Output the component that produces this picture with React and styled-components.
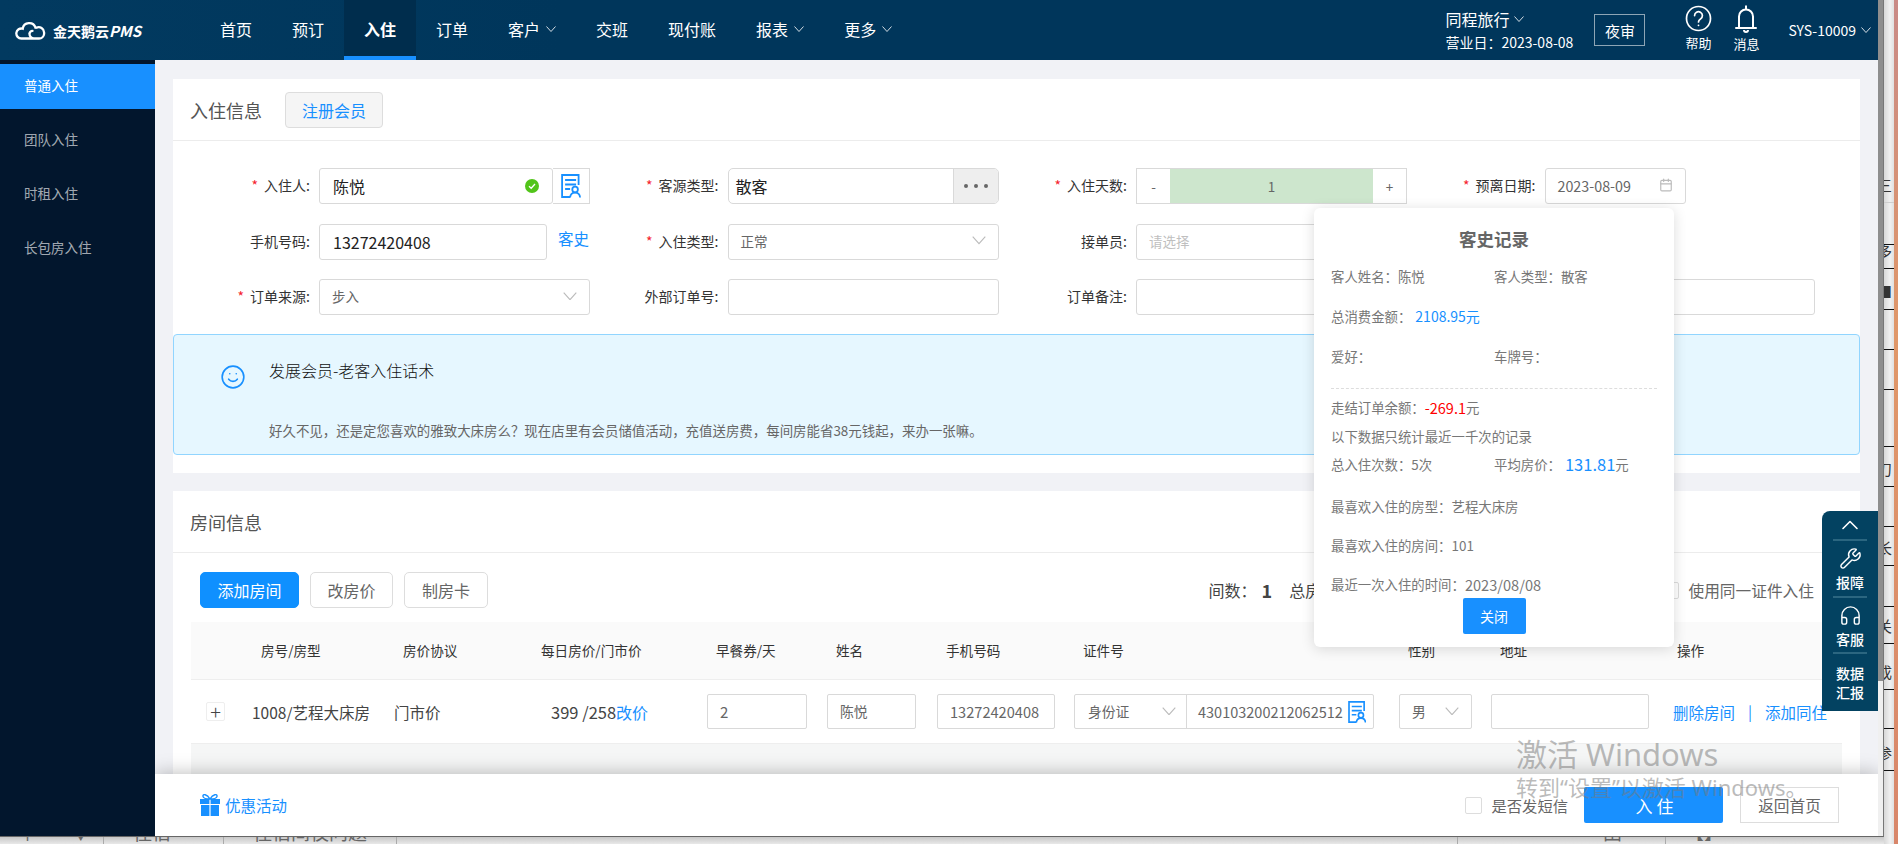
import React from 'react'
import styled, { createGlobalStyle } from 'styled-components'
import { Calendar, ChevronUp, Headphones, Smile, Wrench } from 'lucide-react'

const FONT = '"Noto Sans CJK SC", "Liberation Sans", sans-serif'
const BLUE = '#1890ff'

const GlobalStyle = createGlobalStyle`
    html, body {
        margin: 0;
        overflow: hidden;
        font-family: ${FONT};
        color: #333;
    }
    * {
        box-sizing: border-box;
    }
`

const Desktop = styled.div`
    width: 1898px;
    height: 844px;
    display: grid;
    grid-template-columns: 1884px 1fr;
    grid-template-rows: 837px 1fr;
    overflow: hidden;
    background: #e4e4e4;
`
const Browser = styled.div`
    position: relative;
    display: grid;
    grid-template-columns: 1fr 5px;
    border-right: 1px solid #777;
    border-bottom: 1px solid #666;
    overflow: hidden;
    background: #fff;
`
const Page = styled.div`
    display: grid;
    grid-template-columns: 155px 1fr;
    grid-template-rows: 60px 1fr;
    overflow: hidden;
`
const ScrollTrack = styled.div`
    background: #f0f0f0;
`
const ScrollThumb = styled.div`
    height: 681px;
    background: #8e8e8e;
`

/* header */
const Header = styled.header`
    grid-column: 1 / 3;
    display: flex;
    align-items: stretch;
    padding-right: 7px;
    color: #fff;
    background: linear-gradient(90deg, #023a60, #00365b 30%);
`
const Logo = styled.div`
    width: 200px;
    display: flex;
    align-items: center;
    gap: 7px;
    padding-left: 15px;
    font-size: 14px;
    font-weight: 700;
    white-space: nowrap;
    em {
        font-size: 15px;
        font-style: italic;
    }
`
const NavItem = styled.div`
    height: 60px;
    display: flex;
    align-items: center;
    gap: 6px;
    padding: 2px 20px 0;
    font-size: 16px;
    font-weight: ${(p) => (p.$active ? 700 : 400)};
    white-space: nowrap;
    background: ${(p) => (p.$active ? '#002d4d' : 'transparent')};
    border-bottom: 4px solid ${(p) => (p.$active ? BLUE : 'transparent')};
`
const HeaderRight = styled.div`
    margin-left: auto;
    display: flex;
    align-items: center;
`
const HotelBlock = styled.div`
    width: 129px;
    margin-right: 20px;
    white-space: nowrap;
`
const HotelName = styled.div`
    display: flex;
    align-items: center;
    gap: 5px;
    font-size: 16px;
    line-height: 22px;
`
const BizDate = styled.div`
    font-size: 14px;
    line-height: 20px;
    margin-top: 2px;
`
const AuditButton = styled.div`
    width: 51px;
    height: 32px;
    margin-right: 29px;
    display: flex;
    align-items: center;
    justify-content: center;
    font-size: 15px;
    border: 1px solid #8ea5b5;
`
const HeaderTool = styled.div`
    width: 48px;
    height: 60px;
    display: flex;
    flex-direction: column;
    align-items: center;
    padding-top: 5px;
    font-size: 13px;
    line-height: 18px;
    svg {
        margin-bottom: 2px;
    }
`
const UserName = styled.div`
    margin-left: 18px;
    display: flex;
    align-items: center;
    gap: 5px;
    font-size: 14px;
    white-space: nowrap;
`

/* sidebar */
const Sidebar = styled.aside`
    padding-top: 4px;
    background: #02162d;
`
const SideItem = styled.div`
    height: ${(p) => (p.$active ? 45 : 54)}px;
    margin-bottom: ${(p) => (p.$active ? 4 : 0)}px;
    display: flex;
    align-items: center;
    padding: 0 0 3px 24px;
    font-size: 13.5px;
    color: ${(p) => (p.$active ? '#fff' : 'rgba(255,255,255,.65)')};
    background: ${(p) => (p.$active ? BLUE : 'transparent')};
`

/* content */
const Content = styled.main`
    position: relative;
    padding: 19px 18px 0;
    overflow: hidden;
    background: #f1f2f6;
`
const Card = styled.section`
    background: #fff;
    margin-bottom: 18px;
`
const CardHead = styled.div`
    height: ${(p) => p.$height}px;
    display: flex;
    align-items: center;
    gap: 23px;
    padding-left: 17px;
    border-bottom: 1px solid #ececec;
`
const CardTitle = styled.h3`
    margin: 0;
    font-size: 18px;
    font-weight: 400;
    color: #555;
`
const RegisterButton = styled.div`
    width: 98px;
    height: 36px;
    display: flex;
    align-items: center;
    justify-content: center;
    font-size: 16px;
    color: ${BLUE};
    background: #f5f5f5;
    border: 1px solid #ddd;
    border-radius: 4px;
`

/* form */
const FormGrid = styled.div`
    display: grid;
    grid-template-columns: repeat(4, 408.5px);
    grid-auto-rows: 36px;
    row-gap: 19.5px;
    padding: 27px 0 19px 10px;
`
const Field = styled.div`
    display: flex;
    align-items: center;
    grid-column: ${(p) => (p.$span ? `span ${p.$span}` : 'auto')};
`
const Label = styled.label`
    width: 127px;
    margin-right: 9px;
    padding-bottom: 2px;
    flex-shrink: 0;
    text-align: right;
    font-size: 14px;
    color: #333;
    white-space: nowrap;
`
const Star = styled.span`
    margin-right: 6px;
    color: #f5222d;
`
const Box = styled.div`
    width: ${(p) => p.$width || 271}px;
    height: 36px;
    display: flex;
    align-items: center;
    justify-content: space-between;
    padding: 0 ${(p) => (p.$large ? 13 : 12)}px ${(p) => (p.$large ? 0 : 2)}px;
    font-size: ${(p) => (p.$large ? 16 : p.$size || 13.5)}px;
    color: ${(p) => (p.$large ? '#222' : p.$muted ? '#bfbfbf' : '#666')};
    background: #fff;
    border: 1px solid #d9d9d9;
    border-radius: 3px;
`
const IconAddon = styled.div`
    width: 37px;
    height: 36px;
    display: flex;
    align-items: center;
    justify-content: center;
    border: 1px solid #d9d9d9;
    border-left: 0;
`
const GhostLink = styled.a`
    margin-left: 11px;
    margin-bottom: 8px;
    font-size: 15.5px;
    color: ${BLUE};
`
const PickerBox = styled.div`
    width: 271px;
    height: 36px;
    display: flex;
    align-items: center;
    font-size: 16px;
    color: #222;
    border: 1px solid #d9d9d9;
    border-radius: 5px;
    overflow: hidden;
`
const PickerValue = styled.div`
    flex: 1;
    padding-left: 7px;
`
const PickerDots = styled.div`
    width: 45px;
    height: 100%;
    display: flex;
    align-items: center;
    justify-content: center;
    gap: 6px;
    background: #eee;
    border-left: 1px solid #d9d9d9;
    i {
        width: 4px;
        height: 4px;
        border-radius: 50%;
        background: #666;
    }
`
const Stepper = styled.div`
    width: 271px;
    height: 36px;
    display: grid;
    grid-template-columns: 33px 1fr 33px;
    font-size: 13.5px;
    color: #666;
    border: 1px solid #d9d9d9;
    > div {
        display: flex;
        align-items: center;
        justify-content: center;
    }
`
const StepperValue = styled.div`
    background: #cde6cd;
`

/* alert */
const Tip = styled.div`
    height: 121px;
    display: flex;
    padding: 29px 0 0 46px;
    background: #e6f7ff;
    border: 1px solid #91d5ff;
    border-radius: 4px;
    color: ${BLUE};
`
const TipBody = styled.div`
    margin: -4px 0 0 23px;
`
const TipTitle = styled.div`
    font-size: 16px;
    font-weight: 300;
    line-height: 20px;
    color: #111;
`
const TipText = styled.div`
    margin-top: 40px;
    font-size: 13.45px;
    line-height: 20px;
    color: #666;
`
const CardBottom = styled.div`
    height: 18px;
`

/* rooms */
const Toolbar = styled.div`
    height: 36px;
    margin: 19px 46px 14px 27px;
    display: flex;
    align-items: center;
    gap: 11px;
`
const ToolButton = styled.div`
    width: ${(p) => p.$width}px;
    height: 36px;
    display: flex;
    align-items: center;
    justify-content: center;
    font-size: 16px;
    color: ${(p) => (p.$primary ? '#fff' : '#666')};
    background: ${(p) => (p.$primary ? '#0f90ff' : '#fff')};
    border: 1px solid ${(p) => (p.$primary ? '#0f90ff' : '#ddd')};
    border-radius: 5px;
`
const Stats = styled.div`
    width: 453px;
    margin-left: auto;
    display: flex;
    align-items: center;
    gap: 5px;
    font-size: 16px;
    color: #444;
    white-space: nowrap;
    overflow: hidden;
    b {
        font-size: 18px;
        margin-right: 12px;
    }
`
const SameIdOption = styled.div`
    display: flex;
    align-items: center;
    gap: 10px;
    margin-left: -11px;
    font-size: 15.7px;
    color: #666;
    white-space: nowrap;
`
const CheckBox = styled.span`
    width: 17px;
    height: 17px;
    background: #fff;
    border: 1px solid #ddd;
    border-radius: 2px;
`
const COLUMNS = '54px 142px 143px 170px 120px 110px 137px 325px 92px 182px 176px'
const Table = styled.div`
    margin: 0 18px;
`
const TableHead = styled.div`
    height: 58px;
    display: grid;
    grid-template-columns: ${COLUMNS};
    align-items: center;
    font-size: 13.6px;
    color: #333;
    background: #fafafa;
    border-bottom: 1px solid #eee;
`
const Th = styled.div`
    padding-left: ${(p) => (p.$pad === undefined ? 16 : p.$pad)}px;
    padding-bottom: 2px;
    white-space: nowrap;
`
const TableRow = styled.div`
    height: 64px;
    display: grid;
    grid-template-columns: ${COLUMNS};
    align-items: center;
    font-size: 15.5px;
    color: #444;
    border-bottom: 1px solid #eee;
`
const Td = styled.div`
    padding-left: ${(p) => (p.$pad === undefined ? 7 : p.$pad)}px;
    display: flex;
    align-items: center;
    font-size: ${(p) => p.$size || 15.5}px;
    white-space: nowrap;
`
const ExpandButton = styled.span`
    width: 19px;
    height: 19px;
    margin-left: 8px;
    display: flex;
    align-items: center;
    justify-content: center;
    font-size: 20px;
    font-weight: 300;
    line-height: 1;
    border: 1px solid #eee;
    border-radius: 2px;
`
const CellBox = styled.div`
    width: ${(p) => p.$width}px;
    height: 35px;
    display: flex;
    align-items: center;
    justify-content: space-between;
    padding: 0 12px 1px;
    font-size: ${(p) => p.$size || 13.8}px;
    color: #666;
    border: 1px solid #d9d9d9;
    border-radius: 2px;
`
const IdGroup = styled.div`
    width: 300px;
    height: 35px;
    display: grid;
    grid-template-columns: 112px 1fr;
    align-items: center;
    font-size: 13.8px;
    color: #666;
    border: 1px solid #d9d9d9;
    border-radius: 2px;
`
const IdType = styled.div`
    height: 100%;
    display: flex;
    align-items: center;
    justify-content: space-between;
    padding: 0 10px 1px 13px;
    border-right: 1px solid #d9d9d9;
`
const IdNumber = styled.div`
    display: flex;
    align-items: center;
    justify-content: space-between;
    padding: 0 7px 0 11px;
    font-size: 14.5px;
`
const BlueLink = styled.a`
    color: ${BLUE};
    font-size: ${(p) => p.$size || 15.5}px;
`
const Separator = styled.span`
    margin: 0 13px;
    color: ${BLUE};
    font-size: 15px;
`
const ExpandArea = styled.div`
    height: 60px;
    background: #f5f6f6;
`

/* footer */
const Footer = styled.footer`
    position: absolute;
    left: 0;
    right: 0;
    bottom: 0;
    height: 62px;
    display: flex;
    align-items: center;
    padding: 0 39px 0 45px;
    background: #fff;
    box-shadow: 0 0 18px rgba(0, 0, 0, 0.28);
`
const PromoLink = styled.a`
    display: flex;
    align-items: center;
    gap: 5px;
    font-size: 15.5px;
    color: ${BLUE};
`
const FooterRight = styled.div`
    margin-left: auto;
    display: flex;
    align-items: center;
`
const SmsOption = styled.div`
    display: flex;
    align-items: center;
    gap: 10px;
    margin-right: 16px;
    font-size: 15.3px;
    color: #666;
`
const EnterButton = styled.div`
    width: 139px;
    height: 36px;
    padding-left: 6px;
    display: flex;
    align-items: center;
    justify-content: center;
    font-size: 17px;
    letter-spacing: 4px;
    color: #fff;
    background: ${BLUE};
    border-radius: 2px;
`
const BackButton = styled.div`
    width: 99px;
    height: 36px;
    margin-left: 17px;
    display: flex;
    align-items: center;
    justify-content: center;
    font-size: 15.7px;
    color: #666;
    background: #fff;
    border: 1px solid #ddd;
`

/* history popup */
const Popup = styled.div`
    position: absolute;
    left: 1159px;
    top: 148px;
    width: 360px;
    height: 439px;
    padding: 20px 17px 0;
    font-size: 13.4px;
    color: #777;
    background: #fff;
    border-radius: 6px;
    box-shadow: 0 2px 14px rgba(0, 0, 0, 0.14);
`
const PopupTitle = styled.div`
    margin-bottom: 17px;
    text-align: center;
    font-size: 17.5px;
    font-weight: 700;
    line-height: 22px;
    color: #666;
`
const PopupRow = styled.div`
    height: 20px;
    margin-bottom: ${(p) => p.$gap}px;
    padding-bottom: 2px;
    display: flex;
    align-items: center;
    white-space: nowrap;
`
const PopupCell = styled.div`
    width: 163px;
    display: flex;
    align-items: center;
`
const PopupDash = styled.div`
    margin: 1px 0 9px;
    border-top: 1px dashed #ddd;
`
const PopupValue = styled.span`
    margin-left: ${(p) => p.$left || 0}px;
    font-size: ${(p) => p.$size || 14}px;
    color: ${(p) => p.$color || 'inherit'};
`
const CloseButton = styled.div`
    width: 63px;
    height: 36px;
    margin: 3px auto 0;
    display: flex;
    align-items: center;
    justify-content: center;
    font-size: 14px;
    color: #fff;
    background: ${BLUE};
    border-radius: 2px;
`

/* floating tools */
const FloatPanel = styled.div`
    position: absolute;
    top: 451px;
    right: 0;
    width: 56px;
    height: 200px;
    display: flex;
    flex-direction: column;
    padding: 0 11px;
    color: #fff;
    background: #034261;
    border-top-left-radius: 8px;
`
const FloatItem = styled.div`
    height: ${(p) => p.$height}px;
    display: flex;
    flex-direction: column;
    align-items: center;
    justify-content: center;
    padding-top: ${(p) => (p.$icon ? 2 : 0)}px;
    font-size: 14px;
    font-weight: 500;
    line-height: 19px;
    text-align: center;
    border-bottom: ${(p) => (p.$last ? 0 : '2px solid #2b6680')};
    svg {
        margin-bottom: ${(p) => (p.$icon ? 3 : 0)}px;
    }
`

/* windows watermark */
const Watermark = styled.div`
    position: absolute;
    left: 1516px;
    top: 732px;
    font-family: "Noto Sans", ${FONT};
    color: rgba(120, 120, 120, 0.5);
    pointer-events: none;
    white-space: nowrap;
`
const WatermarkTitle = styled.div`
    font-size: 31px;
    line-height: 44px;
`
const WatermarkText = styled.div`
    font-size: 22px;
    line-height: 28px;
    margin-top: -3px;
`

/* bits of the window behind */
const RightEdge = styled.div`
    grid-column: 2;
    grid-row: 1 / 3;
    display: grid;
    grid-template-columns: 1fr 4px;
    overflow: hidden;
`
const RightColumn = styled.div`
    background: linear-gradient(90deg, #d8d8d8, #f0f0f0 60%, #e0e0e0);
`
const Sliver = styled.div`
    height: ${(p) => p.$height}px;
    display: flex;
    align-items: flex-end;
    border-bottom: 1px solid ${(p) => (p.$faint ? '#cfcfcf' : '#111')};
    font-size: 15px;
    line-height: 26px;
    color: #333;
    overflow: hidden;
    span {
        margin-left: -7px;
        margin-bottom: 4px;
    }
`
const OrangeEdge = styled.div`
    background: linear-gradient(#c98a86, #e09768 40%, #d8866a);
`
const BottomEdge = styled.div`
    grid-column: 1;
    grid-row: 2;
    display: flex;
    font-size: 19px;
    color: #666;
    overflow: hidden;
    background: linear-gradient(#c8c8c8, #e8e8e8);
`
const EdgeCell = styled.div`
    width: ${(p) => p.$width}px;
    padding-left: ${(p) => p.$pad || 0}px;
    border-right: 1px solid ${(p) => (p.$line ? '#aaa' : 'transparent')};
    word-spacing: 30px;
    white-space: nowrap;
    line-height: 19px;
    span {
        display: block;
        margin-top: -15px;
    }
`

const Chevron = ({ size = 10, color = '#d3dde4' }) => (
    <svg width={size} height={size * 0.6} viewBox="0 0 10 6" fill="none" stroke={color} strokeWidth={size > 10 ? 0.8 : 1}>
        <path d="M0.5 0.5 L5 5.5 L9.5 0.5" />
    </svg>
)

const CloudLogo = () => (
    <svg width="31" height="19" viewBox="0 0 31 19" fill="none" stroke="#fff" strokeWidth="2.3">
        <path d="M18 17.5 H6.5 a5 5 0 1 1 1.2 -9.8 a6.6 6.6 0 0 1 12.8 -1 a4.2 4.2 0 0 1 1 0 a5.4 5.4 0 0 1 7.6 4.8 v1.5 a5 5 0 0 1 -5 4.5 h-5 a4.5 4.5 0 0 1 -4.6 -4.6 a3 3 0 0 1 3 -3" strokeLinecap="round" />
    </svg>
)

const HelpIcon = () => (
    <svg width="27" height="27" viewBox="0 0 27 27" fill="none" stroke="#fff" strokeWidth="1.7">
        <circle cx="13.5" cy="13.5" r="12" />
        <path d="M9.6 10.6 a3.9 3.9 0 1 1 5.9 3.3 c-1.3 .8 -2 1.5 -2 3" strokeLinecap="round" />
        <circle cx="13.5" cy="20.3" r="0.9" fill="#fff" stroke="none" />
    </svg>
)

const BellIcon = () => (
    <svg width="22" height="28" viewBox="0 0 22 28" fill="none" stroke="#fff" strokeWidth="2">
        <path d="M4 22 V11.5 a7 7 0 0 1 14 0 V22" />
        <path d="M1 23 H21" strokeLinecap="round" />
        <path d="M11 0.5 V4" />
        <path d="M9 25 a2 2 0 0 0 4 0" />
    </svg>
)

const IdCardIcon = ({ height = 24 }) => (
    <svg width={height * 0.8} height={height} viewBox="0 0 19 24" fill="none" stroke={BLUE} strokeWidth="1.8">
        <path d="M9 23 H1 V1 H17.5 V11" />
        <path d="M4 6 H15 M4 10.5 H15 M4 15 H9" />
        <circle cx="14" cy="15.5" r="2.8" />
        <path d="M9 23.5 c0.3 -3.5 2 -4.8 5 -4.8 s4.7 1.3 5 4.8" />
    </svg>
)

const OkIcon = () => (
    <svg width="14" height="14" viewBox="0 0 14 14">
        <circle cx="7" cy="7" r="7" fill="#52c41a" />
        <path d="M4 7.2 L6.2 9.3 L10 5" fill="none" stroke="#fff" strokeWidth="1.3" />
    </svg>
)

const GiftIcon = () => (
    <svg width="20" height="22" viewBox="0 0 20 22" fill={BLUE}>
        <rect x="0" y="5" width="9.4" height="5" />
        <rect x="10.6" y="5" width="9.4" height="5" />
        <rect x="1" y="11" width="8.4" height="11" />
        <rect x="10.6" y="11" width="8.4" height="11" />
        <path d="M10 5 C7 0 2.5 -0.5 3 2.5 C3.3 4.5 7 5 10 5 C13 5 16.7 4.5 17 2.5 C17.5 -0.5 13 0 10 5 Z" fill="none" stroke={BLUE} strokeWidth="1.4" />
    </svg>
)

const NAV = [
    { name: '首页' },
    { name: '预订' },
    { name: '入住', active: true },
    { name: '订单' },
    { name: '客户', arrow: true },
    { name: '交班' },
    { name: '现付账' },
    { name: '报表', arrow: true },
    { name: '更多', arrow: true },
]

const SIDE = ['团队入住', '时租入住', '长包房入住']

const SLIVERS = [
    { h: 203, text: '三', faint: true },
    { h: 42 },
    { h: 24, text: '多' },
    { h: 41, text: '■' },
    { h: 40 },
    { h: 40 },
    { h: 57 },
    { h: 40, text: '刀' },
    { h: 40 },
    { h: 39, text: '长' },
    { h: 41 },
    { h: 37, text: '关' },
    { h: 46, text: '成' },
    { h: 39 },
    { h: 42, text: '参' },
]

const App = () => {
    return (
        <Desktop>
            <GlobalStyle />
            <Browser>
                <Page>
                    <Header>
                        <Logo>
                            <CloudLogo />
                            <span>金天鹅云<em>PMS</em></span>
                        </Logo>
                        {NAV.map((item) => (
                            <NavItem key={item.name} $active={item.active}>
                                {item.name}
                                {item.arrow && <Chevron />}
                            </NavItem>
                        ))}
                        <HeaderRight>
                            <HotelBlock>
                                <HotelName>同程旅行 <Chevron /></HotelName>
                                <BizDate>营业日：2023-08-08</BizDate>
                            </HotelBlock>
                            <AuditButton>夜审</AuditButton>
                            <HeaderTool><HelpIcon />帮助</HeaderTool>
                            <HeaderTool><BellIcon />消息</HeaderTool>
                            <UserName>SYS-10009 <Chevron /></UserName>
                        </HeaderRight>
                    </Header>

                    <Sidebar>
                        <SideItem $active>普通入住</SideItem>
                        {SIDE.map((name) => (
                            <SideItem key={name}>{name}</SideItem>
                        ))}
                    </Sidebar>

                    <Content>
                        <Card>
                            <CardHead $height={62}>
                                <CardTitle>入住信息</CardTitle>
                                <RegisterButton>注册会员</RegisterButton>
                            </CardHead>
                            <FormGrid>
                                <Field>
                                    <Label><Star>*</Star>入住人:</Label>
                                    <Box $width={234} $large>陈悦<OkIcon /></Box>
                                    <IconAddon><IdCardIcon /></IconAddon>
                                </Field>
                                <Field>
                                    <Label><Star>*</Star>客源类型:</Label>
                                    <PickerBox>
                                        <PickerValue>散客</PickerValue>
                                        <PickerDots><i /><i /><i /></PickerDots>
                                    </PickerBox>
                                </Field>
                                <Field>
                                    <Label><Star>*</Star>入住天数:</Label>
                                    <Stepper>
                                        <div>-</div>
                                        <StepperValue>1</StepperValue>
                                        <div>+</div>
                                    </Stepper>
                                </Field>
                                <Field>
                                    <Label><Star>*</Star>预离日期:</Label>
                                    <Box $width={141} $size={14.3}>2023-08-09<Calendar size={14} color="#bbb" /></Box>
                                </Field>

                                <Field>
                                    <Label>手机号码:</Label>
                                    <Box $width={228} $large>13272420408</Box>
                                    <GhostLink>客史</GhostLink>
                                </Field>
                                <Field>
                                    <Label><Star>*</Star>入住类型:</Label>
                                    <Box>正常<Chevron size={14} color="#bbb" /></Box>
                                </Field>
                                <Field>
                                    <Label>接单员:</Label>
                                    <Box $muted>请选择<Chevron size={14} color="#bbb" /></Box>
                                </Field>
                                <Field />

                                <Field>
                                    <Label><Star>*</Star>订单来源:</Label>
                                    <Box>步入<Chevron size={14} color="#bbb" /></Box>
                                </Field>
                                <Field>
                                    <Label>外部订单号:</Label>
                                    <Box />
                                </Field>
                                <Field $span={2}>
                                    <Label>订单备注:</Label>
                                    <Box $width={679} />
                                </Field>
                            </FormGrid>
                            <Tip>
                                <Smile size={26} strokeWidth={1.5} />
                                <TipBody>
                                    <TipTitle>发展会员-老客入住话术</TipTitle>
                                    <TipText>好久不见，还是定您喜欢的雅致大床房么？现在店里有会员储值活动，充值送房费，每间房能省38元钱起，来办一张嘛。</TipText>
                                </TipBody>
                            </Tip>
                            <CardBottom />
                        </Card>

                        <Card>
                            <CardHead $height={62}>
                                <CardTitle>房间信息</CardTitle>
                            </CardHead>
                            <Toolbar>
                                <ToolButton $primary $width={99}>添加房间</ToolButton>
                                <ToolButton $width={83}>改房价</ToolButton>
                                <ToolButton $width={84}>制房卡</ToolButton>
                                <Stats>
                                    间数：<b>1</b>总房价：399
                                </Stats>
                                <SameIdOption><CheckBox />使用同一证件入住</SameIdOption>
                            </Toolbar>
                            <Table>
                                <TableHead>
                                    <Th />
                                    <Th>房号/房型</Th>
                                    <Th>房价协议</Th>
                                    <Th $pad={11}>每日房价/门市价</Th>
                                    <Th>早餐券/天</Th>
                                    <Th>姓名</Th>
                                    <Th>手机号码</Th>
                                    <Th>证件号</Th>
                                    <Th>性别</Th>
                                    <Th>地址</Th>
                                    <Th $pad={11}>操作</Th>
                                </TableHead>
                                <TableRow>
                                    <Td><ExpandButton>+</ExpandButton></Td>
                                    <Td>1008/艺程大床房</Td>
                                    <Td>门市价</Td>
                                    <Td $pad={21} $size={16.5}>399 /258<BlueLink $size={16}>改价</BlueLink></Td>
                                    <Td><CellBox $width={100} $size={15}>2</CellBox></Td>
                                    <Td><CellBox $width={89}>陈悦</CellBox></Td>
                                    <Td><CellBox $width={118} $size={14.6}>13272420408</CellBox></Td>
                                    <Td>
                                        <IdGroup>
                                            <IdType>身份证<Chevron size={14} color="#bbb" /></IdType>
                                            <IdNumber>430103200212062512<IdCardIcon height={22} /></IdNumber>
                                        </IdGroup>
                                    </Td>
                                    <Td><CellBox $width={73}>男<Chevron size={14} color="#bbb" /></CellBox></Td>
                                    <Td><CellBox $width={158} /></Td>
                                    <Td>
                                        <BlueLink>删除房间</BlueLink>
                                        <Separator>|</Separator>
                                        <BlueLink>添加同住</BlueLink>
                                    </Td>
                                </TableRow>
                                <ExpandArea />
                            </Table>
                        </Card>

                        <Footer>
                            <PromoLink><GiftIcon />优惠活动</PromoLink>
                            <FooterRight>
                                <SmsOption><CheckBox />是否发短信</SmsOption>
                                <EnterButton>入住</EnterButton>
                                <BackButton>返回首页</BackButton>
                            </FooterRight>
                        </Footer>

                        <Popup>
                            <PopupTitle>客史记录</PopupTitle>
                            <PopupRow $gap={20}>
                                <PopupCell>客人姓名：陈悦</PopupCell>
                                <PopupCell>客人类型：散客</PopupCell>
                            </PopupRow>
                            <PopupRow $gap={20}>
                                总消费金额：<PopupValue $left={4} $color={BLUE}>2108.95元</PopupValue>
                            </PopupRow>
                            <PopupRow $gap={21}>
                                <PopupCell>爱好：</PopupCell>
                                <PopupCell>车牌号：</PopupCell>
                            </PopupRow>
                            <PopupDash />
                            <PopupRow $gap={9}>
                                走结订单余额：<PopupValue $size={14.5} $color="#ff0000">-269.1</PopupValue>元
                            </PopupRow>
                            <PopupRow $gap={8}>以下数据只统计最近一千次的记录</PopupRow>
                            <PopupRow $gap={22}>
                                <PopupCell>总入住次数：5次</PopupCell>
                                <PopupCell>
                                    平均房价：<PopupValue $left={4} $size={16.5} $color={BLUE}>131.81</PopupValue>元
                                </PopupCell>
                            </PopupRow>
                            <PopupRow $gap={19}>最喜欢入住的房型：艺程大床房</PopupRow>
                            <PopupRow $gap={19}>最喜欢入住的房间：101</PopupRow>
                            <PopupRow $gap={0}>最近一次入住的时间：<PopupValue $size={14.6}>2023/08/08</PopupValue></PopupRow>
                            <CloseButton>关闭</CloseButton>
                        </Popup>

                        <FloatPanel>
                            <FloatItem $height={30}><ChevronUp size={28} strokeWidth={1.4} /></FloatItem>
                            <FloatItem $height={57} $icon><Wrench size={23} strokeWidth={1.5} />报障</FloatItem>
                            <FloatItem $height={56} $icon><Headphones size={23} strokeWidth={1.5} />客服</FloatItem>
                            <FloatItem $height={57} $last>数据<br />汇报</FloatItem>
                        </FloatPanel>
                    </Content>
                </Page>
                <ScrollTrack><ScrollThumb /></ScrollTrack>
                <Watermark>
                    <WatermarkTitle>激活 Windows</WatermarkTitle>
                    <WatermarkText>转到“设置”以激活 Windows。</WatermarkText>
                </Watermark>
            </Browser>

            <RightEdge>
                <RightColumn>
                    {SLIVERS.map((cell, i) => (
                        <Sliver key={i} $height={cell.h} $faint={cell.faint}>
                            {cell.text && <span>{cell.text}</span>}
                        </Sliver>
                    ))}
                </RightColumn>
                <OrangeEdge />
            </RightEdge>

            <BottomEdge>
                <EdgeCell $width={104} $line $pad={18}><span>↑ ▼</span></EdgeCell>
                <EdgeCell $width={120} $line $pad={29}><span>住宿</span></EdgeCell>
                <EdgeCell $width={173} $line $pad={29}><span>住宿间夜问题</span></EdgeCell>
                <EdgeCell $width={1061} $line />
                <EdgeCell $width={145} $pad={145}><span>田</span></EdgeCell>
                <EdgeCell $width={62} $line />
                <EdgeCell $width={218} $pad={19}><span>【】</span></EdgeCell>
            </BottomEdge>
        </Desktop>
    )
}

export default App
